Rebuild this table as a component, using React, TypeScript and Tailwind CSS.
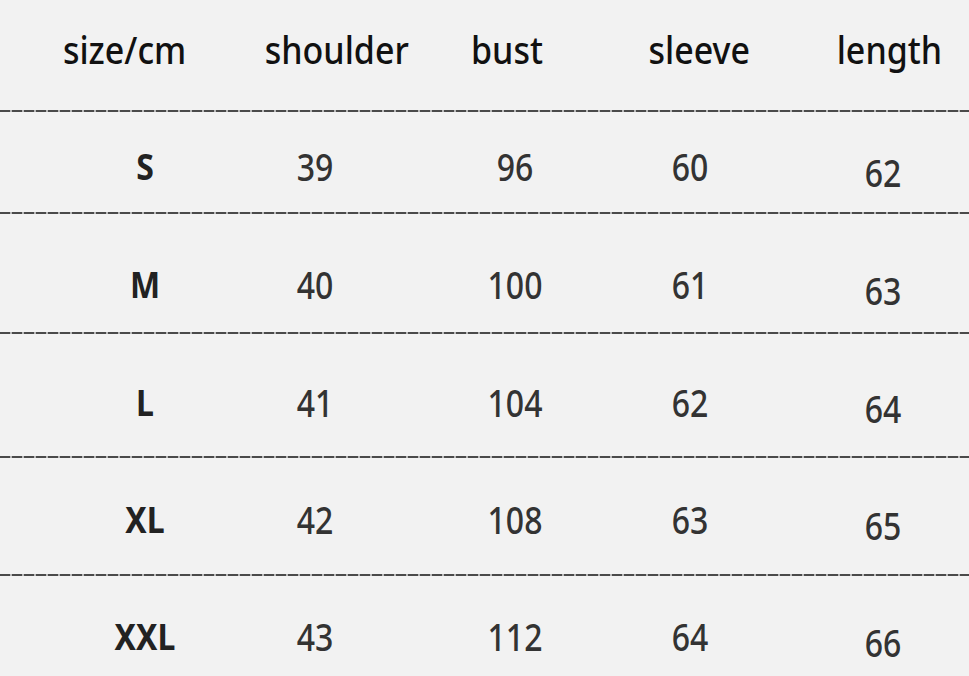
import React from "react";

const rows = [
  { size: "S", vals: ["39", "96", "60", "62"], h: "h-[100px]", pt: "pt-[10px]" },
  { size: "M", vals: ["40", "100", "61", "63"], h: "h-[118px]", pt: "pt-[24px]" },
  { size: "L", vals: ["41", "104", "62", "64"], h: "h-[122px]", pt: "pt-[16px]" },
  { size: "XL", vals: ["42", "108", "63", "65"], h: "h-[116px]", pt: "pt-[8px]" },
  { size: "XXL", vals: ["43", "112", "64", "66"], h: "h-[100px]", pt: "pt-[22px]" },
];

function Dash() {
  return (
    <div className="h-[2px] w-full bg-[repeating-linear-gradient(90deg,#4a4a4a_0px,#4a4a4a_10px,#b8b8b8_10px,#b8b8b8_12px)]" />
  );
}

const dataMl = ["ml-[95px]", "ml-[70px]", "ml-[100px]", "ml-[75px]", "ml-[93px]"];

export default function App() {
  return (
    <div
      className="w-[969px] h-[676px] overflow-hidden bg-[#f2f2f2] flex flex-col"
      style={{ fontFamily: '"Noto Sans", "Open Sans", sans-serif' }}
    >
      <div className="h-[110px] flex items-center pb-[10px] text-[34px] font-medium text-[#111] leading-none shrink-0">
        <div className="ml-[45px] w-[160px] text-center scale-y-110">size/cm</div>
        <div className="ml-[53px] w-[160px] text-center scale-y-110">shoulder</div>
        <div className="ml-[11px] w-[160px] text-center scale-y-110">bust</div>
        <div className="ml-[33px] w-[160px] text-center scale-y-110">sleeve</div>
        <div className="ml-[31px] w-[160px] text-center scale-y-110">length</div>
      </div>
      {rows.map((r) => (
        <React.Fragment key={r.size}>
          <Dash />
          <div className={`${r.h} ${r.pt} flex items-center leading-none shrink-0`}>
            <div className={`${dataMl[0]} w-[100px] text-center text-[32px] font-bold text-[#222] scale-y-110`}>
              {r.size}
            </div>
            <div className={`${dataMl[1]} w-[100px] text-center text-[32px] font-medium text-[#333] scale-y-[1.18]`}>
              {r.vals[0]}
            </div>
            <div className={`${dataMl[2]} w-[100px] text-center text-[32px] font-medium text-[#333] scale-y-[1.18]`}>
              {r.vals[1]}
            </div>
            <div className={`${dataMl[3]} w-[100px] text-center text-[32px] font-medium text-[#333] scale-y-[1.18]`}>
              {r.vals[2]}
            </div>
            <div className={`${dataMl[4]} mt-[12px] w-[100px] text-center text-[32px] font-medium text-[#333] scale-y-[1.18]`}>
              {r.vals[3]}
            </div>
          </div>
        </React.Fragment>
      ))}
    </div>
  );
}
